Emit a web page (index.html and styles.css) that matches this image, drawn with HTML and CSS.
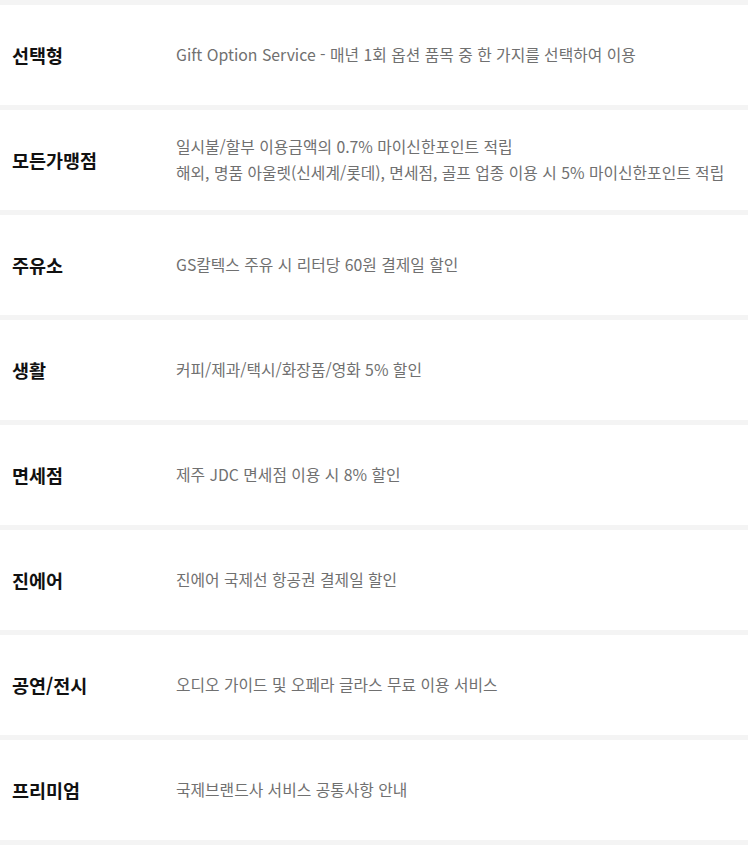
FILE: index.html
```html
<!DOCTYPE html>
<html lang="ko">
<head>
    <meta charset="UTF-8">
    <meta name="viewport" content="width=device-width, initial-scale=1.0">
    <title>카드 혜택</title>
    <link rel="stylesheet" href="styles.css">
</head>
<body>
    <div class="benefits">
        <div class="row">
            <div class="label">선택형</div>
            <div class="desc"><p>Gift Option Service - 매년 1회 옵션 품목 중 한 가지를 선택하여 이용</p></div>
        </div>
        <div class="row">
            <div class="label">모든가맹점</div>
            <div class="desc">
                <p>일시불/할부 이용금액의 0.7% 마이신한포인트 적립</p>
                <p>해외, 명품 아울렛(신세계/롯데), 면세점, 골프 업종 이용 시 5% 마이신한포인트 적립</p>
            </div>
        </div>
        <div class="row">
            <div class="label">주유소</div>
            <div class="desc"><p>GS칼텍스 주유 시 리터당 60원 결제일 할인</p></div>
        </div>
        <div class="row">
            <div class="label">생활</div>
            <div class="desc"><p>커피/제과/택시/화장품/영화 5% 할인</p></div>
        </div>
        <div class="row">
            <div class="label">면세점</div>
            <div class="desc"><p>제주 JDC 면세점 이용 시 8% 할인</p></div>
        </div>
        <div class="row">
            <div class="label">진에어</div>
            <div class="desc"><p>진에어 국제선 항공권 결제일 할인</p></div>
        </div>
        <div class="row">
            <div class="label">공연/전시</div>
            <div class="desc"><p>오디오 가이드 및 오페라 글라스 무료 이용 서비스</p></div>
        </div>
        <div class="row">
            <div class="label">프리미엄</div>
            <div class="desc"><p>국제브랜드사 서비스 공통사항 안내</p></div>
        </div>
    </div>
</body>
</html>
```

FILE: styles.css
```css
body {
    margin: 0;
    background: #ffffff;
    font-family: "Noto Sans CJK KR", "Noto Sans", sans-serif;
}
.benefits {
    border-top: 5px solid #f4f4f4;
}
.row {
    display: flex;
    align-items: center;
    height: 100px;
    border-bottom: 5px solid #f4f4f4;
    background: #ffffff;
}
.label {
    width: 164px;
    padding-left: 12px;
    font-size: 18.5px;
    font-weight: 700;
    color: #111111;
}
.desc {
    font-size: 15.8px;
    color: #707070;
}
.desc p {
    margin: 0;
    line-height: 26px;
}
```
